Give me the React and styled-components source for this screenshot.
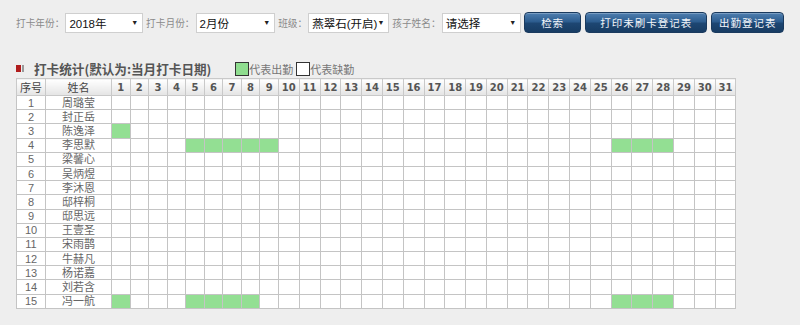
import styled, { createGlobalStyle } from 'styled-components';

const GlobalStyle = createGlobalStyle`
  html, body {
    margin: 0;
    padding: 0;
    background: #eeeeee;
  }
  body {
    font-family: "Liberation Sans", "Noto Sans CJK SC", sans-serif;
  }
`;

const STUDENTS = [
  '周璐莹', '封正岳', '陈逸泽', '李思默', '梁馨心', '吴炳煜', '李沐恩', '邸梓桐',
  '邸思远', '王壹圣', '宋雨鹊', '牛赫凡', '杨诺嘉', '刘若含', '冯一航',
];

// attended days per student, indexed by row
const ATTENDANCE = {
  3: [1],
  4: [5, 6, 7, 8, 9, 26, 27, 28],
  15: [1, 5, 6, 7, 8, 26, 27, 28],
};

const DAYS = Array.from({ length: 31 }, (_, i) => i + 1);

const Page = styled.div`
  padding: 12px 16px 0 16px;
  width: 800px;
  height: 325px;
  box-sizing: border-box;
`;

const Toolbar = styled.div`
  display: flex;
  align-items: center;
  height: 21px;
`;

const Label = styled.span`
  font-family: "Noto Sans CJK SC", sans-serif;
  font-size: 9.7px;
  color: #8a8a8a;
  margin-right: 1px;
  white-space: nowrap;
`;

const SelectBox = styled.div`
  display: flex;
  align-items: center;
  justify-content: space-between;
  box-sizing: border-box;
  width: ${({ w }) => w}px;
  height: 20px;
  padding: 0 4px 0 3px;
  margin-right: 3px;
  background: #fff;
  border: 1px solid #cfcfcf;
  font-size: 11.5px;
  color: #111;
  white-space: nowrap;
`;

const Arrow = styled.span`
  font-size: 7px;
  color: #222;
`;

const Button = styled.button`
  height: 21px;
  width: ${({ w }) => w}px;
  margin-left: ${({ gap }) => gap}px;
  border: 1px solid #1a3a5e;
  border-radius: 4px;
  background: linear-gradient(#4f7fb0 0%, #2d5d8f 45%, #1d4672 55%, #173c63 100%);
  color: #f4f6fa;
  font-family: "Noto Sans CJK SC", sans-serif;
  font-size: 10.5px;
  letter-spacing: 1px;
  padding: 0;
  cursor: pointer;
  box-shadow: inset 0 1px 0 rgba(255, 255, 255, 0.25);
`;

const TitleRow = styled.div`
  display: flex;
  align-items: center;
  margin-top: 26px;
  height: 19px;
`;

const TitleMark = styled.span`
  display: inline-flex;
  align-items: center;
  gap: 1px;
  margin-right: 10px;
`;

const MarkBar = styled.span`
  display: block;
  width: ${({ w }) => w}px;
  height: 7px;
  background: ${({ c }) => c};
`;

const Title = styled.span`
  font-family: "Noto Sans CJK SC", sans-serif;
  font-size: 12.6px;
  font-weight: bold;
  color: #555;
`;

const Legend = styled.span`
  display: inline-flex;
  align-items: center;
  margin-left: ${({ gap }) => gap}px;
  font-family: "Noto Sans CJK SC", sans-serif;
  font-size: 11px;
  color: #777;
`;

const Swatch = styled.span`
  display: inline-block;
  box-sizing: border-box;
  width: 14px;
  height: 14px;
  border: 1px solid #333;
  background: ${({ on }) => (on ? '#8fdd8f' : '#fff')};
`;

const Table = styled.table`
  border-collapse: collapse;
  table-layout: fixed;
  background: #fff;
`;

const Th = styled.th`
  width: ${({ w }) => w}px;
  height: 14px;
  padding: 0;
  border: 1px solid #c9c9c9;
  background: linear-gradient(#ffffff, #e4e4e4);
  font-family: "DejaVu Sans", "Noto Sans CJK SC", sans-serif;
  font-size: 10px;
  font-weight: bold;
  color: #555;
  text-align: center;
  overflow: hidden;
`;

const ThCjk = styled(Th)`
  font-family: "Noto Sans CJK SC", sans-serif;
  font-size: 11px;
  font-weight: normal;
  color: #444;
`;

const Td = styled.td`
  height: 13.2px;
  padding: 0;
  border: 1px solid #c4c4c4;
  background: ${({ on }) => (on ? '#93df93' : '#fff')};
  font-family: "Liberation Sans", "Noto Sans CJK SC", sans-serif;
  font-size: 11px;
  line-height: 12px;
  color: #666;
  text-align: center;
  white-space: nowrap;
  overflow: hidden;
`;

const dayWidth = (d) => (d < 10 ? 17.55 : 19.8);

export default function App() {
  return (
    <Page>
      <GlobalStyle />
      <Toolbar>
        <Label>打卡年份：</Label>
        <SelectBox w={78}>2018年<Arrow>▼</Arrow></SelectBox>
        <Label>打卡月份：</Label>
        <SelectBox w={80}>2月份<Arrow>▼</Arrow></SelectBox>
        <Label>班级：</Label>
        <SelectBox w={81}>燕翠石(开启)<Arrow>▼</Arrow></SelectBox>
        <Label>孩子姓名：</Label>
        <SelectBox w={80}>请选择<Arrow>▼</Arrow></SelectBox>
        <Button w={57} gap={0}>检索</Button>
        <Button w={123} gap={4}>打印未刷卡登记表</Button>
        <Button w={73} gap={4}>出勤登记表</Button>
      </Toolbar>

      <TitleRow>
        <TitleMark>
          <MarkBar w={5} c="#b01c1c" />
          <MarkBar w={2} c="#999" />
        </TitleMark>
        <Title>打卡统计(默认为:当月打卡日期)</Title>
        <Legend gap={24}><Swatch on />代表出勤</Legend>
        <Legend gap={3}><Swatch />代表缺勤</Legend>
      </TitleRow>

      <Table>
        <thead>
          <tr>
            <ThCjk w={28}>序号</ThCjk>
            <ThCjk w={65}>姓名</ThCjk>
            {DAYS.map((d) => (
              <Th key={d} w={dayWidth(d)}>{d}</Th>
            ))}
          </tr>
        </thead>
        <tbody>
          {STUDENTS.map((name, i) => {
            const row = i + 1;
            const present = ATTENDANCE[row] || [];
            return (
              <tr key={row}>
                <Td>{row}</Td>
                <Td>{name}</Td>
                {DAYS.map((d) => (
                  <Td key={d} on={present.includes(d)} />
                ))}
              </tr>
            );
          })}
        </tbody>
      </Table>
    </Page>
  );
}
